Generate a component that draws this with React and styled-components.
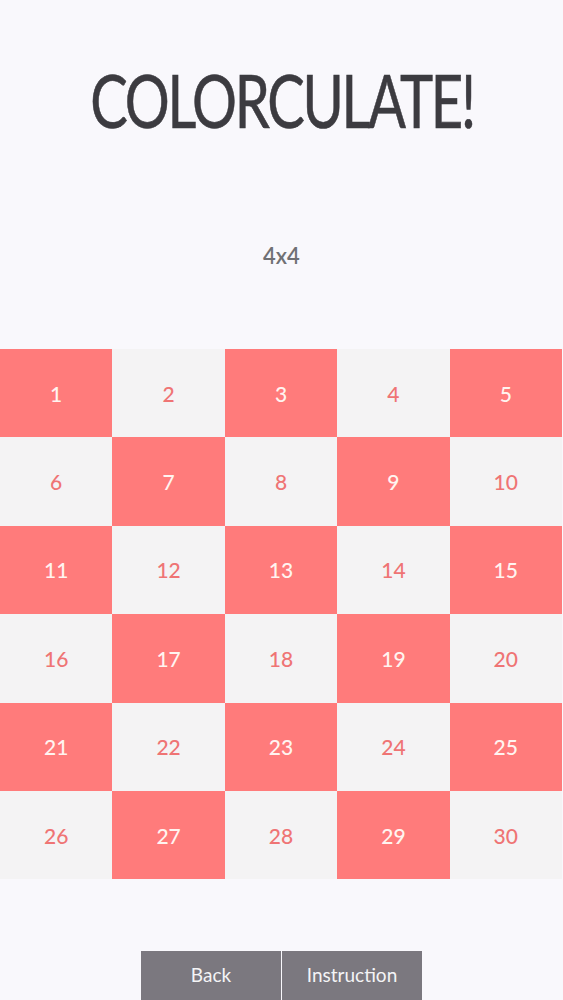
import React from 'react';
import styled, { createGlobalStyle } from 'styled-components';

const GlobalStyle = createGlobalStyle`
  html, body {
    margin: 0;
    padding: 0;
    background: #f9f8fc;
  }
  body {
    font-family: "Lato", "Noto Sans", sans-serif;
  }
`;

const Page = styled.div`
  width: 563px;
  height: 1000px;
  display: flex;
  flex-direction: column;
  align-items: center;
  overflow: hidden;
`;

const Title = styled.h1`
  margin: 64px 0 0;
  font-family: "Lato", sans-serif;
  font-weight: 400;
  font-size: 73px;
  line-height: 73px;
  height: 73px;
  letter-spacing: -3px;
  color: #3c3b40;
  white-space: nowrap;
  transform: scaleX(0.77);
  -webkit-text-stroke: 0.6px #3c3b40;
`;

const Size = styled.div`
  margin-top: 104px;
  height: 30px;
  font-size: 22px;
  line-height: 30px;
  font-weight: 600;
  color: #707074;
`;

const Grid = styled.div`
  margin-top: 78px;
  width: 562px;
  align-self: flex-start;
  display: grid;
  grid-template-columns: repeat(5, 1fr);
  grid-auto-rows: 88.4px;
`;

const Cell = styled.div`
  display: flex;
  align-items: center;
  justify-content: center;
  font-size: 21px;
  font-weight: 500;
  background: ${p => (p.$hot ? '#ff7b7b' : '#f4f3f4')};
  color: ${p => (p.$hot ? '#fff4f0' : '#ef7474')};
`;

const Buttons = styled.div`
  margin-top: auto;
  display: flex;
  gap: 1px;
`;

const Button = styled.button`
  width: 140px;
  height: 49px;
  border: none;
  border-radius: 0;
  background: #7b787f;
  color: #f4f4f6;
  font-family: "Lato", sans-serif;
  font-size: 19px;
  padding: 0 0 2px;
`;

export default function App() {
  const cells = Array.from({ length: 30 }, (_, i) => i + 1);
  return (
    <>
      <GlobalStyle />
      <Page>
        <Title>COLORCULATE!</Title>
        <Size>4x4</Size>
        <Grid>
          {cells.map(n => (
            <Cell key={n} $hot={(n - 1) % 2 === 0}>
              {n}
            </Cell>
          ))}
        </Grid>
        <Buttons>
          <Button>Back</Button>
          <Button>Instruction</Button>
        </Buttons>
      </Page>
    </>
  );
}
